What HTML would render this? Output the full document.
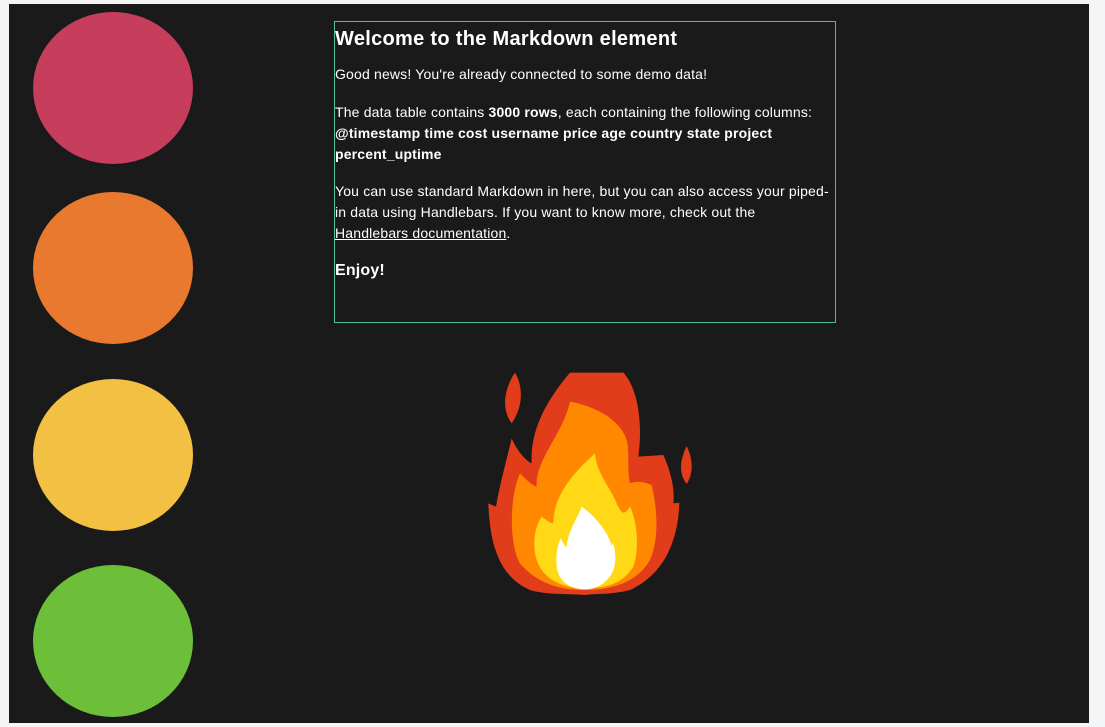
<!DOCTYPE html>
<html><head><meta charset="utf-8"><style>
html,body{margin:0;padding:0}
body{width:1105px;height:727px;background:#f4f5f7;position:relative;overflow:hidden;font-family:"Liberation Sans",sans-serif}
#dark{position:absolute;left:9px;top:4px;width:1080px;height:719px;background:#1a1a1a}
.c{position:absolute;left:33px;width:160px;height:152px;border-radius:50%}
#box{position:absolute;left:334px;top:21px;width:500px;height:300px;border:1px solid #4fbf94;color:#fff;font-size:14px;line-height:21px;letter-spacing:0.17px}
#box h1{font-size:20px;margin:0;position:absolute;top:5px;left:0;line-height:24px;letter-spacing:0.3px}
#box p{margin:0;position:absolute;left:0;width:498px}
a{color:#fff}
svg{position:absolute;left:470px;top:360px}
</style></head><body>
<div id="dark"></div>
<div class="c" style="top:12px;background:#c73d5c"></div>
<div class="c" style="top:192px;background:#e9792f"></div>
<div class="c" style="top:379px;background:#f2c143"></div>
<div class="c" style="top:565px;background:#6dbf3a"></div>
<div id="box">
<h1>Welcome to the Markdown element</h1>
<p style="top:42px">Good news! You're already connected to some demo data!</p>
<p style="top:80px">The data table contains <b>3000 rows</b>, each containing the following columns:<br><b>@timestamp time cost username price age country state project percent_uptime</b></p>
<p style="top:159px">You can use standard Markdown in here, but you can also access your piped-<br>in data using Handlebars. If you want to know more, check out the<br><a href="#">Handlebars documentation</a>.</p>
<p style="top:238px;font-size:16px;font-weight:bold">Enjoy!</p>
</div>
<svg width="240" height="250" viewBox="0 0 720 750">
<path fill="#e23d1a" d="M300,38 L460,38 C500,80 520,180 505,290 L580,285 C600,330 615,380 610,430 L628,428 C625,530 590,640 480,690 C420,705 380,700 345,705 C280,700 230,705 180,690 C90,650 60,560 55,430 L78,440 C90,370 110,300 125,235 C140,270 165,300 185,310 C180,210 230,120 300,38 Z"/>
<path fill="#e23d1a" d="M135,38 C160,80 160,140 125,190 C95,150 100,90 135,38 Z M650,258 C670,300 670,340 650,372 C625,340 630,300 650,258 Z"/>
<path fill="#ff8800" d="M300,125 C380,140 450,180 470,240 C480,280 470,330 480,370 C510,360 530,370 545,375 C560,440 570,530 540,600 C500,670 420,690 345,690 C270,690 200,670 150,610 C120,560 115,420 150,340 C170,360 185,375 200,380 C195,300 280,220 300,125 Z"/>
<path fill="#ffd915" d="M375,280 C380,340 420,380 440,430 C455,460 460,470 480,440 C500,480 510,560 490,620 C460,670 410,685 345,685 C280,685 220,660 200,600 C185,550 195,500 215,470 C230,480 240,490 250,490 C250,400 320,330 375,280 Z"/>
<path fill="#fff" d="M335,440 C390,480 420,530 425,560 L428,548 C440,580 440,620 420,650 C395,680 370,688 345,688 C300,688 270,665 262,630 C255,590 262,560 272,535 C280,550 285,560 290,560 C295,510 320,480 335,440 Z"/>
</svg>
</body></html>
